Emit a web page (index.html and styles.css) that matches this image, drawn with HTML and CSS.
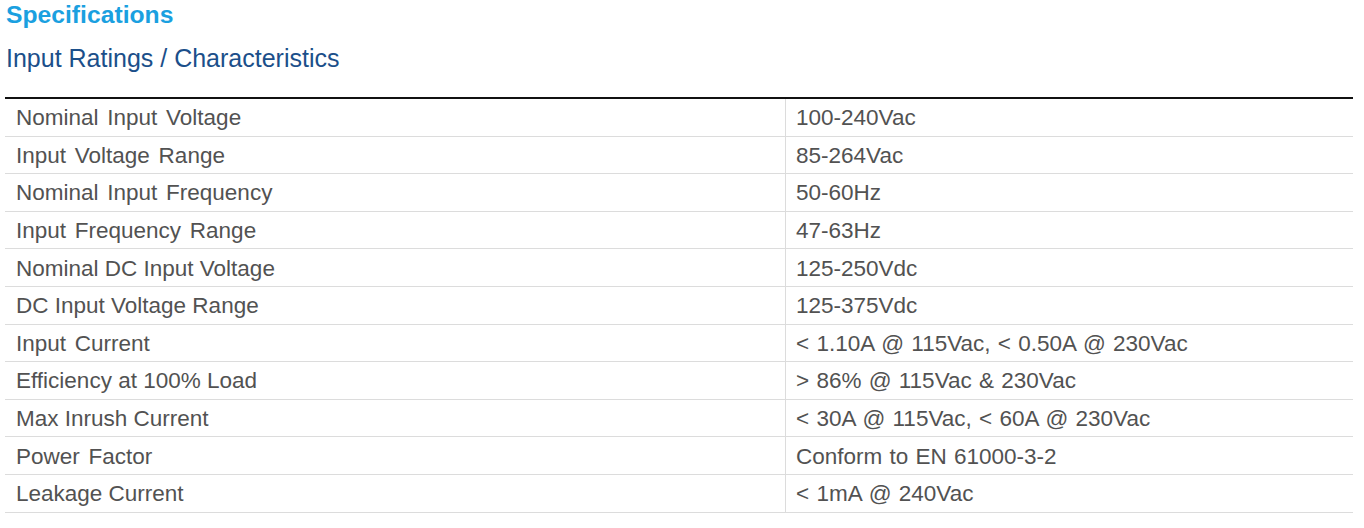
FILE: index.html
```html
<!DOCTYPE html>
<html lang="en">
<head>
<meta charset="utf-8">
<title>Specifications</title>
<link rel="stylesheet" href="styles.css">
</head>
<body>
<div class="page">
  <h1 class="title">Specifications</h1>
  <h2 class="subtitle">Input Ratings / Characteristics</h2>
  <div class="spec">
    <div class="row"><div class="cell key spaced">Nominal Input Voltage</div><div class="cell val">100-240Vac</div></div>
    <div class="row"><div class="cell key spaced">Input Voltage Range</div><div class="cell val">85-264Vac</div></div>
    <div class="row"><div class="cell key spaced">Nominal Input Frequency</div><div class="cell val">50-60Hz</div></div>
    <div class="row"><div class="cell key spaced">Input Frequency Range</div><div class="cell val">47-63Hz</div></div>
    <div class="row"><div class="cell key">Nominal DC Input Voltage</div><div class="cell val">125-250Vdc</div></div>
    <div class="row"><div class="cell key">DC Input Voltage Range</div><div class="cell val">125-375Vdc</div></div>
    <div class="row"><div class="cell key spaced">Input Current</div><div class="cell val">&lt; 1.10A @ 115Vac, &lt; 0.50A @ 230Vac</div></div>
    <div class="row"><div class="cell key">Efficiency at 100% Load</div><div class="cell val">&gt; 86% @ 115Vac &amp; 230Vac</div></div>
    <div class="row"><div class="cell key">Max Inrush Current</div><div class="cell val">&lt; 30A @ 115Vac, &lt; 60A @ 230Vac</div></div>
    <div class="row"><div class="cell key spaced">Power Factor</div><div class="cell val">Conform to EN 61000-3-2</div></div>
    <div class="row"><div class="cell key">Leakage Current</div><div class="cell val">&lt; 1mA @ 240Vac</div></div>
  </div>
</div>
</body>
</html>
```
FILE: styles.css
```css
html, body {
  margin: 0;
  padding: 0;
  background: #ffffff;
}

body {
  font-family: "Liberation Sans", Arial, sans-serif;
}

.page {
  padding: 0 11px 0 5px;
}

.title {
  margin: 0;
  padding: 1px 0 0 1px;
  font-size: 24.7px;
  line-height: 28px;
  font-weight: bold;
  color: #1aa0e0;
}

.subtitle {
  margin: 0;
  padding: 15px 0 0 1px;
  font-size: 25px;
  line-height: 28px;
  font-weight: normal;
  color: #1b4f8a;
}

.spec {
  margin-top: 25px;
  border-top: 2px solid #111111;
}

.row {
  display: grid;
  grid-template-columns: 780px 1fr;
  height: 37.6px;
  box-sizing: border-box;
  border-bottom: 1px solid #dcdcdc;
}

.cell {
  display: flex;
  align-items: center;
  padding-top: 2px;
  font-size: 22.5px;
  color: #525252;
  white-space: nowrap;
}

.key {
  padding-left: 11px;
}

.spaced {
  word-spacing: 2.5px;
}

.val {
  padding-left: 10px;
  word-spacing: 1px;
  border-left: 1px solid #dcdcdc;
}
```
